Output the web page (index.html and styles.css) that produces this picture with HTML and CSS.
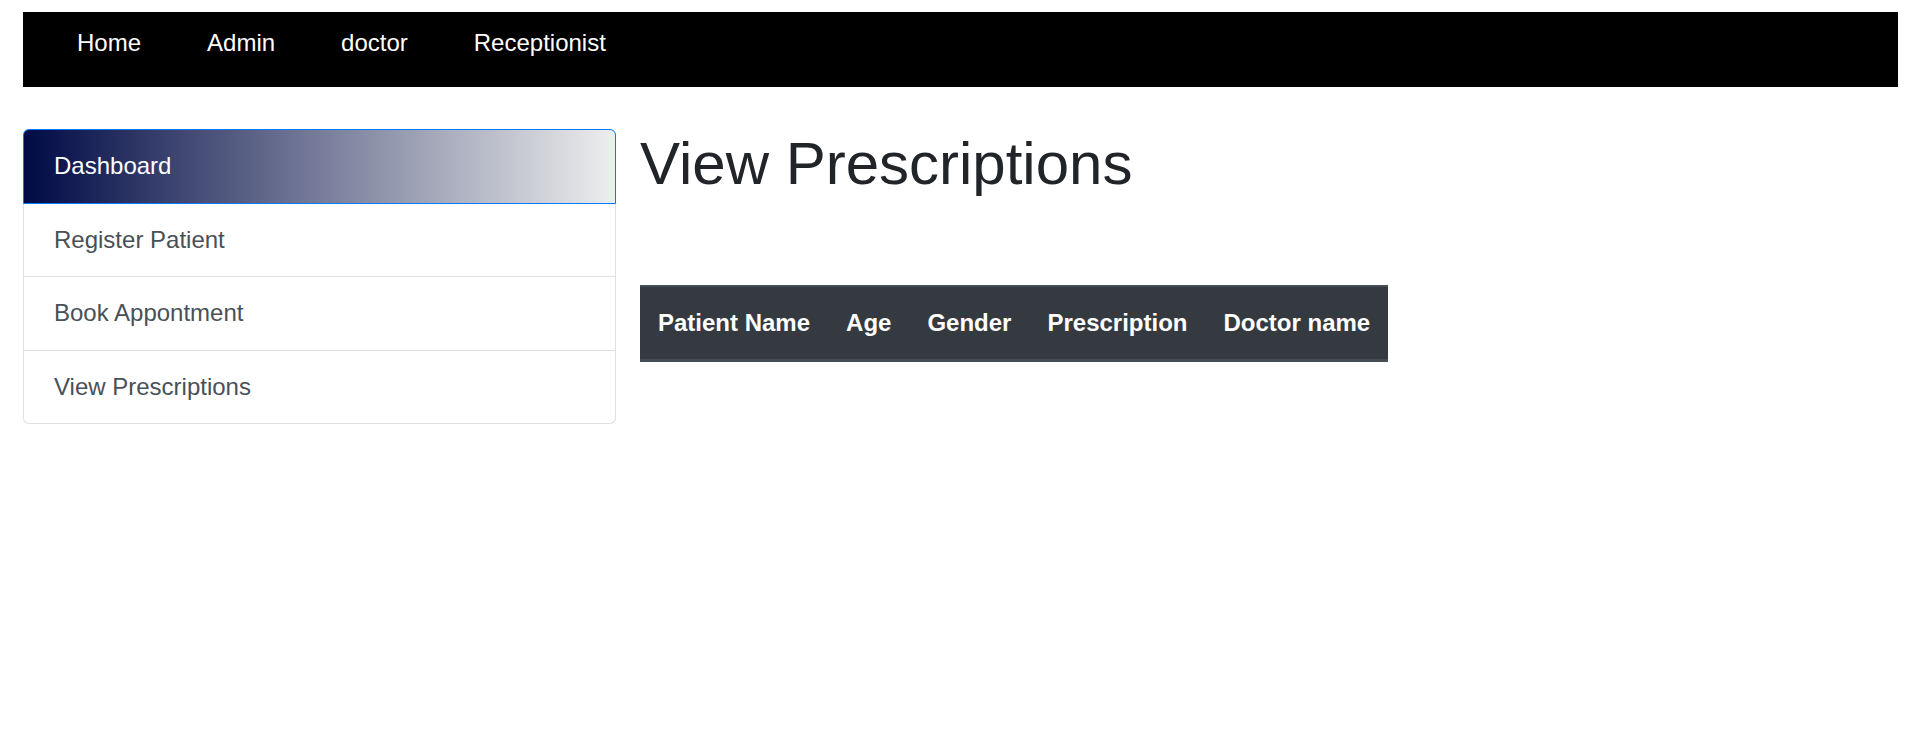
FILE: index.html
```html
<!DOCTYPE html>
<html lang="en">
<head>
<meta charset="utf-8">
<title>View Prescriptions</title>
<link rel="stylesheet" href="styles.css">
</head>
<body>
<nav class="topnav">
  <a class="topnav-link" href="#">Home</a>
  <a class="topnav-link" href="#">Admin</a>
  <a class="topnav-link" href="#">doctor</a>
  <a class="topnav-link" href="#">Receptionist</a>
</nav>
<div class="layout">
  <div class="sidebar">
    <a class="side-item active" href="#">Dashboard</a>
    <a class="side-item" href="#">Register Patient</a>
    <a class="side-item" href="#">Book Appontment</a>
    <a class="side-item" href="#">View Prescriptions</a>
  </div>
  <main class="main">
    <h1 class="title">View Prescriptions</h1>
    <table class="rx-table">
      <thead>
        <tr>
          <th>Patient Name</th>
          <th>Age</th>
          <th>Gender</th>
          <th>Prescription</th>
          <th>Doctor name</th>
        </tr>
      </thead>
      <tbody></tbody>
    </table>
  </main>
</div>
</body>
</html>
```
FILE: styles.css
```css
* { box-sizing: border-box; }
html, body { margin: 0; padding: 0; background: #fff; }
body {
  font-family: "Liberation Sans", Arial, sans-serif;
  font-size: 24px;
  line-height: 1.5;
  color: #212529;
}
a { text-decoration: none; }

.topnav {
  margin: 12px 22px 0 23px;
  height: 75px;
  background: #000;
  display: flex;
  align-items: flex-start;
  padding: 12.5px 0 0 21px;
}
.topnav-link {
  color: #fff;
  padding: 0 33px;
  line-height: 36px;
  font-size: 24px;
}

.layout {
  display: flex;
  align-items: flex-start;
  gap: 24px;
  padding: 0 22px 0 23px;
  margin-top: 38px;
}
.sidebar {
  width: 593px;
  flex: 0 0 593px;
  margin-top: 4px;
  display: flex;
  flex-direction: column;
  border-radius: 6px;
}
.side-item {
  display: block;
  padding: 18.25px 30px;
  line-height: 36px;
  color: #495057;
  background: #fff;
  border: 1px solid rgba(0, 0, 0, 0.125);
  margin-top: -1px;
}
.side-item:first-child {
  margin-top: 0;
  border-top-left-radius: 6px;
  border-top-right-radius: 6px;
}
.side-item:last-child {
  border-bottom-left-radius: 6px;
  border-bottom-right-radius: 6px;
}
.side-item.active {
  color: #fff;
  border-color: #007bff;
  background: linear-gradient(to right, #000a45, #edeeee);
  position: relative;
  z-index: 1;
}

.main {
  flex: 1;
}
.title {
  margin: 3px 0 12px 0;
  font-size: 60px;
  font-weight: 400;
  line-height: 1.2;
  color: #212529;
}
.rx-table {
  margin-top: 85px;
  border-collapse: collapse;
}
.rx-table th {
  background: #343a40;
  color: #fff;
  font-weight: 700;
  text-align: left;
  padding: 18px;
  line-height: 36px;
  border-top: 2px solid #454d55;
  border-bottom: 3px solid #454d55;
  white-space: nowrap;
}
```
